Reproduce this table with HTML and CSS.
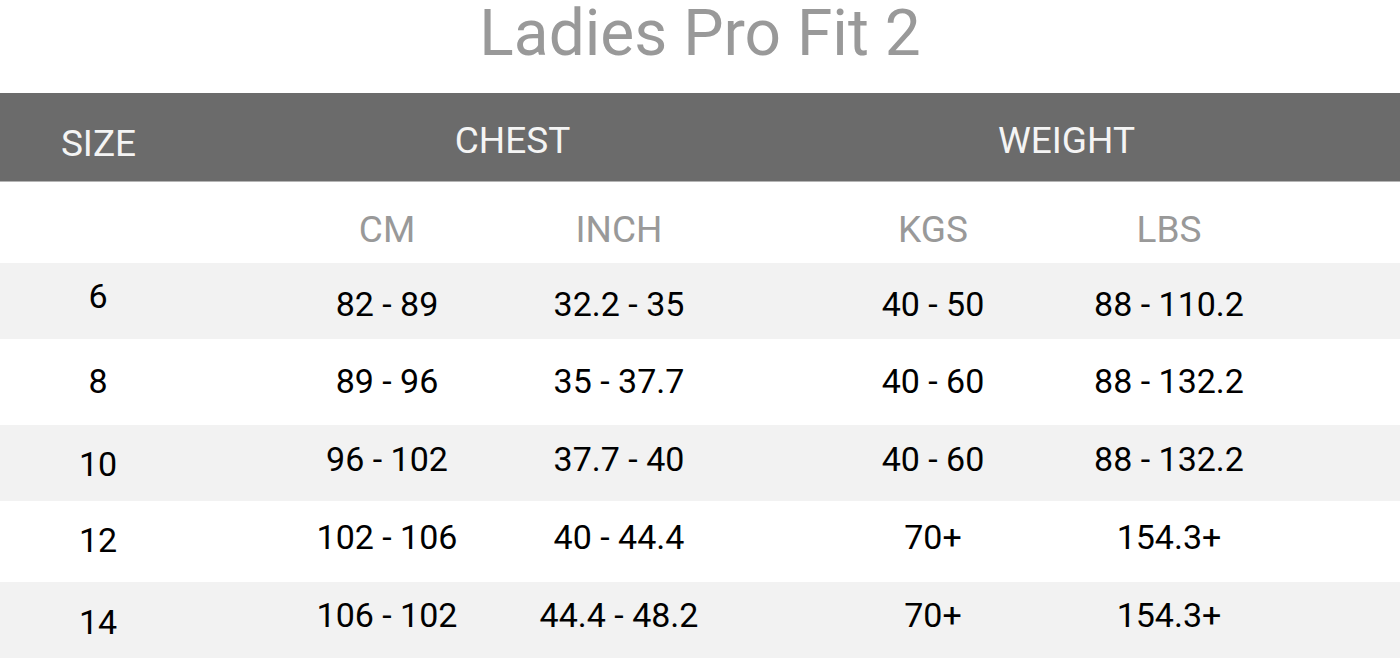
FILE: index.html
```html
<!DOCTYPE html>
<html lang="en">
<head>
<meta charset="utf-8">
<title>Ladies Pro Fit 2</title>
<link rel="stylesheet" href="styles.css">
</head>
<body>
<div class="page">
  <h1 class="title"><span class="title-text">Ladies Pro Fit 2</span></h1>
  <div class="head">
    <div class="h-size">SIZE</div>
    <div class="h-group">CHEST</div>
    <div class="h-group">WEIGHT</div>
  </div>
  <div class="row sub">
    <div class="c cm">CM</div>
    <div class="c inch">INCH</div>
    <div class="c kgs">KGS</div>
    <div class="c lbs">LBS</div>
  </div>
  <div class="row data r1 shade">
    <div class="c size">6</div>
    <div class="c cm">82 - 89</div>
    <div class="c inch">32.2 - 35</div>
    <div class="c kgs">40 - 50</div>
    <div class="c lbs">88 - 110.2</div>
  </div>
  <div class="row data r2">
    <div class="c size">8</div>
    <div class="c cm">89 - 96</div>
    <div class="c inch">35 - 37.7</div>
    <div class="c kgs">40 - 60</div>
    <div class="c lbs">88 - 132.2</div>
  </div>
  <div class="row data r3 shade">
    <div class="c size">10</div>
    <div class="c cm">96 - 102</div>
    <div class="c inch">37.7 - 40</div>
    <div class="c kgs">40 - 60</div>
    <div class="c lbs">88 - 132.2</div>
  </div>
  <div class="row data r4">
    <div class="c size">12</div>
    <div class="c cm">102 - 106</div>
    <div class="c inch">40 - 44.4</div>
    <div class="c kgs">70+</div>
    <div class="c lbs">154.3+</div>
  </div>
  <div class="row data r5 shade">
    <div class="c size">14</div>
    <div class="c cm">106 - 102</div>
    <div class="c inch">44.4 - 48.2</div>
    <div class="c kgs">70+</div>
    <div class="c lbs">154.3+</div>
  </div>
</div>
</body>
</html>
```
FILE: styles.css
```css
* { box-sizing: border-box; }
html, body { margin: 0; padding: 0; background: #fff; }
body { font-family: Roboto, "Liberation Sans", sans-serif; }

.page { width: 1400px; }

.title {
  margin: 0;
  height: 93px;
  display: flex;
  justify-content: center;
  align-items: flex-start;
  font-size: 64px;
  font-weight: 400;
  color: #999999;
}
.title-text {
  display: block;
  line-height: 75px;
  margin-top: -4px;
}

.head {
  display: grid;
  grid-template-columns: 197px 631px 477px;
  height: 89px;
  background: #6b6b6b;
  border-bottom: 1px solid #b4b4b4;
  color: #f4f4f4;
  font-size: 37px;
  line-height: 37px;
}
.h-size { text-align: center; padding-top: 32px; }
.h-group { text-align: center; padding-top: 29px; }

.row {
  display: grid;
  grid-template-columns: 196px 75px 232px 232px 80px 236px 236px;
}
.c { text-align: center; white-space: nowrap; }
.size { grid-column: 1; }
.cm { grid-column: 3; }
.inch { grid-column: 4; }
.kgs { grid-column: 6; }
.lbs { grid-column: 7; }

.sub {
  height: 81px;
  color: #999999;
  font-size: 37px;
  line-height: 37px;
}
.sub .c { padding-top: 29px; }

.data {
  font-size: 34px;
  line-height: 34px;
  color: #000;
}
.shade { background: #f2f2f2; }

.r1 { height: 76px; }
.r1 .c { padding-top: 24px; }
.r1 .size { padding-top: 16px; }

.r2 { height: 86px; }
.r2 .c { padding-top: 25px; }

.r3 { height: 76px; }
.r3 .c { padding-top: 17px; }
.r3 .size { padding-top: 22px; }

.r4 { height: 81px; }
.r4 .c { padding-top: 19px; }
.r4 .size { padding-top: 22px; }

.r5 { height: 76px; }
.r5 .c { padding-top: 16px; }
.r5 .size { padding-top: 23px; }
```
